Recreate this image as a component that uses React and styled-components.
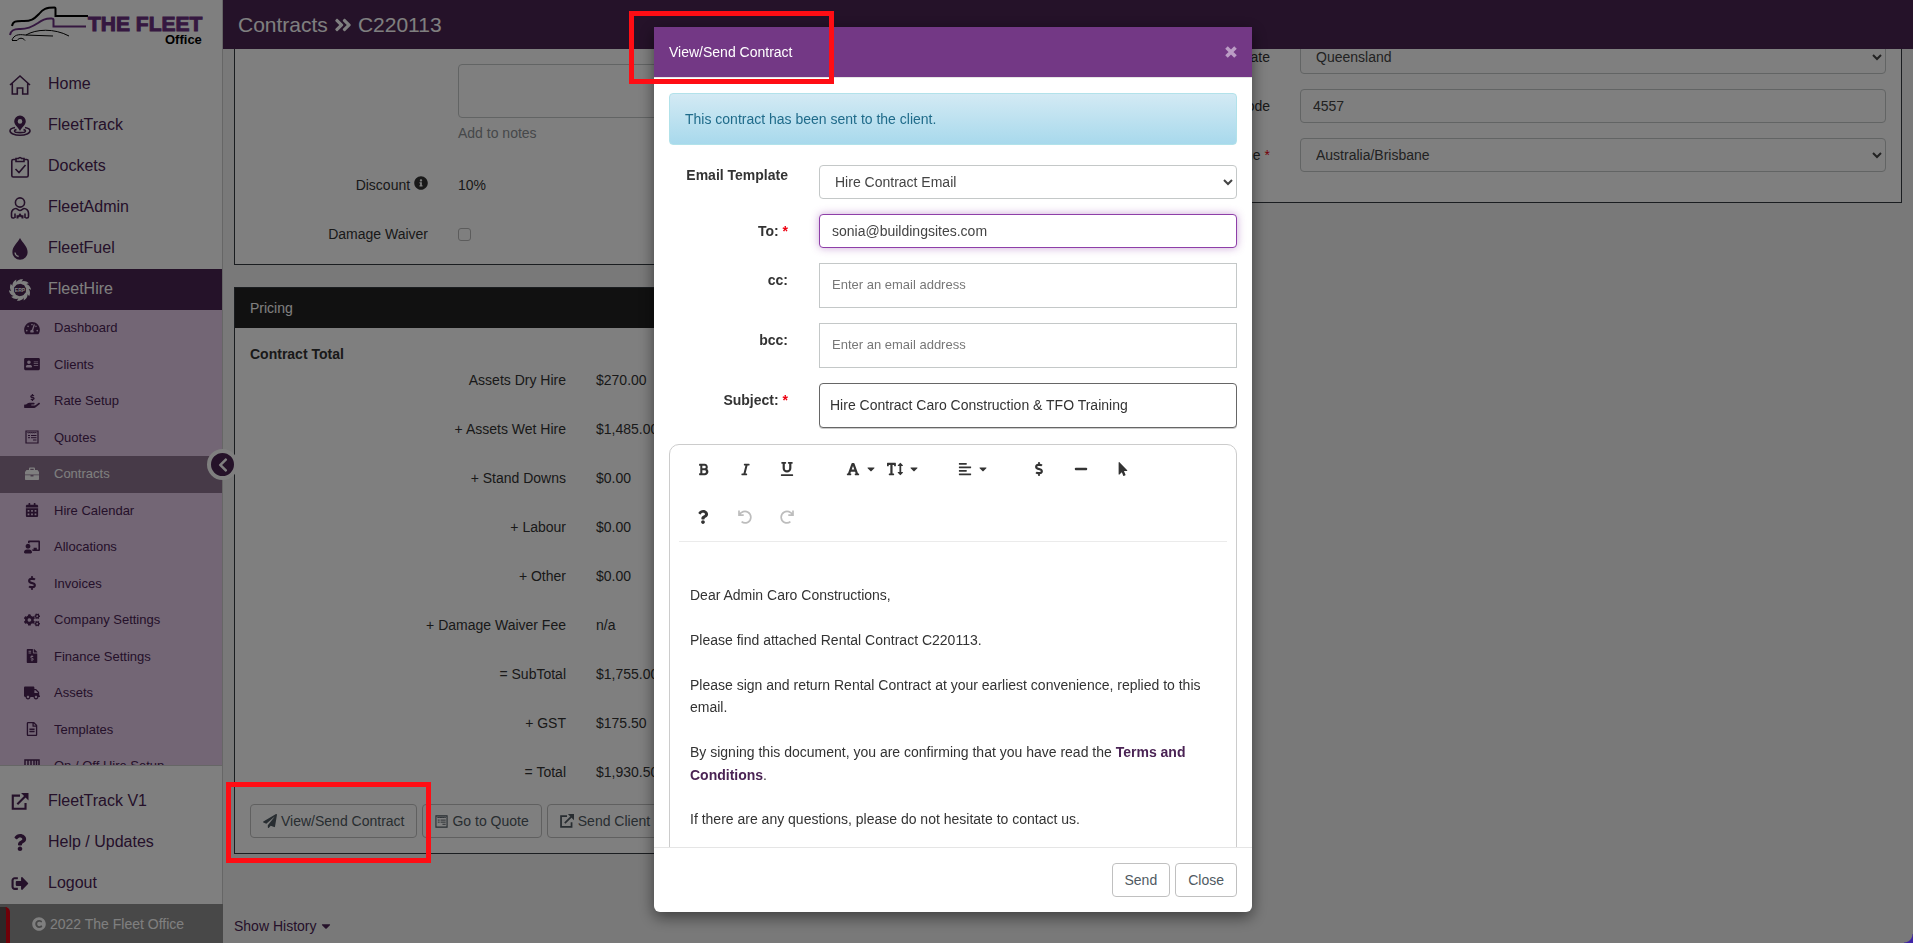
import React from 'react';
import styled, { createGlobalStyle, css } from 'styled-components';
import {
  FaAddressCard,
  FaAlignLeft,
  FaAngleDoubleRight,
  FaBold,
  FaCalendarAlt,
  FaCaretDown,
  FaChalkboardTeacher,
  FaChevronLeft,
  FaCogs,
  FaCopyright,
  FaDollarSign,
  FaFileInvoiceDollar,
  FaFont,
  FaHandHoldingUsd,
  FaInfoCircle,
  FaItalic,
  FaMinus,
  FaMousePointer,
  FaPaperPlane,
  FaQuestion,
  FaRegFileAlt,
  FaSignOutAlt,
  FaTachometerAlt,
  FaTextHeight,
  FaTruck,
  FaUnderline,
} from 'react-icons/fa';

const GlobalStyle = createGlobalStyle`
  * {
    box-sizing: border-box;
  }
  body {
    margin: 0;
    overflow: hidden;
    background: #f2f2f2;
    color: #333333;
    font-family: "Liberation Sans", Arial, sans-serif;
    font-size: 14px;
    line-height: 20px;
  }
  button, input, select, textarea {
    font-family: inherit;
    font-size: 14px;
  }
  a {
    color: #4a2354;
    text-decoration: none;
  }
`;

const Page = styled.div`
  display: flex;
  height: 100vh;
`;

/* sidebar */

const Sidebar = styled.aside`
  display: flex;
  flex-direction: column;
  flex: 0 0 223px;
  position: relative;
  background: #ffffff;
  border-right: 1px solid #cccccc;
`;

const Logo = styled.a`
  display: block;
  flex: none;
  height: 64px;
`;

const NavItem = styled.a`
  display: flex;
  flex: none;
  align-items: center;
  height: 41px;
  padding-left: 9px;
  gap: 17px;
  font-size: 16px;
  color: #4a2354;

  svg {
    flex: none;
    width: 22px;
    height: ${(props) => (props.$small ? '17px' : '22px')};
  }
  span {
    margin-bottom: 1px;
  }
  ${(props) =>
    props.$active &&
    css`
      background: #4a2452;
      color: #ffffff;
    `}
`;

const SubMenu = styled.div`
  flex: 1 1 0;
  overflow: hidden;
  background: #e6ccea;
  border-bottom: 1px solid #cccccc;
`;

const SubItem = styled.a`
  display: flex;
  align-items: center;
  gap: 14px;
  padding: 8px 0 9px 24px;
  font-size: 13px;
  line-height: 1.5;
  color: #4a2354;

  svg {
    flex: none;
    width: 16px;
    height: 14px;
  }
  ${(props) =>
    props.$active &&
    css`
      background: #8f7590;
      color: #ffffff;
    `}
`;

const BottomNav = styled.div`
  flex: none;
  padding-top: 15px;
`;

const Copyright = styled.div`
  display: flex;
  flex: none;
  align-items: center;
  gap: 4px;
  height: 39px;
  padding-left: 32px;
  margin-right: -1px;
  background: #909090;
  color: #ffffff;
`;

const Recorder = styled.div`
  position: absolute;
  left: 0;
  bottom: 0;
  width: 10px;
  height: 36px;
  background: #5a5050;
  border-right: 4px solid #e00010;
  border-top-right-radius: 5px;
`;

const CollapseButton = styled.button`
  position: absolute;
  right: -16px;
  top: 449px;
  display: flex;
  align-items: center;
  justify-content: center;
  width: 31px;
  height: 31px;
  padding: 0;
  border: 4px solid #ffffff;
  border-radius: 50%;
  background: #4a2452;
  color: #ffffff;
  clip-path: inset(0 3px 0 0);
`;

/* page content */

const Main = styled.main`
  flex: 1;
  min-width: 0;
  display: flex;
  flex-direction: column;
`;

const TopBar = styled.header`
  display: flex;
  flex: none;
  align-items: center;
  gap: 5px;
  height: 49px;
  padding: 0 15px;
  background: #4a2452;
  color: #ffffff;
  font-size: 21px;
`;

const Content = styled.div`
  flex: 1;
  min-height: 0;
  overflow: hidden;
  padding: 0 11px;
`;

const Columns = styled.div`
  display: grid;
  grid-template-columns: 1fr 1fr;
  gap: 24px;
  align-items: start;
`;

const Column = styled.div`
  display: flex;
  flex-direction: column;
  gap: 22px;
`;

const Panel = styled.section`
  background: #ffffff;
  border: 1px solid #343a40;
  ${(props) => props.$open && 'border-top: 0;'}
`;

const PanelTitle = styled.h2`
  margin: 0;
  padding: 10px 15px;
  background: #222222;
  color: #ffffff;
  font-size: 14px;
  font-weight: normal;
`;

const FieldList = styled.div`
  display: flex;
  flex-direction: column;
  gap: 15px;
  padding: 0 15px ${(props) => props.$bottom};
  margin-top: -9px;
`;

const Field = styled.div`
  display: grid;
  grid-template-columns: ${(props) => props.$label} 1fr;
  gap: 30px;
  min-height: 34px;

  > label,
  > span {
    padding: 7px 0;
  }
  > label {
    text-align: right;
  }
`;

const Required = styled.span`
  color: #ee0010;
`;

const controlStyle = css`
  display: block;
  width: 100%;
  height: 34px;
  padding: 6px 12px;
  border: 1px solid #c4c8c8;
  border-radius: 4px;
  background: #ffffff;
  color: #444444;
`;

const TextInput = styled.input`
  ${controlStyle}
  ${(props) =>
    props.$focused &&
    css`
      border-color: #8e3fa8;
      box-shadow: 0 0 8px rgba(142, 63, 168, 0.45);
      outline: none;
    `}
  ${(props) =>
    props.$tag &&
    css`
      height: 45px;
      padding: 5px 12px 7px;
      border-radius: 0;
      font-size: 13px;
      &::placeholder {
        color: #777777;
      }
    `}
  ${(props) =>
    props.$strong &&
    css`
      height: 45px;
      padding: 5px 10px 7px;
      border-color: #666666;
      box-shadow: 0 1px 0 #cccccc;
      color: #333333;
    `}
`;

const Select = styled.select`
  ${controlStyle}
  padding-left: 11px;
`;

const NotesWrap = styled.div`
  padding: 24px 0 10px;
`;

const Notes = styled.textarea`
  ${controlStyle}
  height: 54px;
  resize: none;
`;

const Hint = styled.p`
  margin: 5px 0 0;
  color: #8c9094;
`;

const CheckBox = styled.input`
  width: 13px;
  height: 13px;
  margin: 11px 0;
  appearance: none;
  border: 1px solid #b8b8b8;
  border-radius: 3px;
`;

const PricingBody = styled.div`
  padding: 14px 15px 15px;
`;

const PricingHeading = styled.h3`
  margin: 0;
  font-size: 14px;
  line-height: 24px;
`;

const PriceList = styled.dl`
  display: grid;
  grid-template-columns: 316px 1fr;
  column-gap: 30px;
  row-gap: 15px;
  margin: 0 0 12px;

  dt,
  dd {
    margin: 0;
    padding: 4px 0 10px;
  }
  dt {
    text-align: right;
  }
`;

const ButtonRow = styled.div`
  display: flex;
  gap: 5px;
`;

const Button = styled.button`
  display: flex;
  flex: none;
  align-items: center;
  gap: 4px;
  height: 34px;
  padding: 0 12px;
  border: 1px solid #c0c0c0;
  border-radius: 4px;
  background: #ffffff;
  color: #505a62;
`;

const HistoryLink = styled.a`
  display: inline-flex;
  align-items: center;
  gap: 3px;
  margin-top: 62px;
`;

/* outlines of the tutorial steps */

const Highlight = styled.div`
  position: absolute;
  left: ${(props) => props.$left};
  top: ${(props) => props.$top};
  z-index: 30;
  width: 205px;
  height: ${(props) => props.$height};
  border: 5px solid #ff0d14;
  pointer-events: none;
`;

const Anchor = styled.div`
  position: relative;
`;

/* dialog */

const Backdrop = styled.div`
  position: fixed;
  inset: 0;
  z-index: 20;
  display: flex;
  align-items: flex-start;
  justify-content: center;
  padding: 27px 7px 0 0;
  background: rgba(0, 0, 0, 0.5);
`;

const Dialog = styled.div`
  position: relative;
  width: 598px;
  max-width: 100%;
  border-radius: 0 0 6px 6px;
  background: #ffffff;
  box-shadow: 0 5px 15px rgba(0, 0, 0, 0.5);
`;

const DialogHeader = styled.header`
  display: flex;
  align-items: center;
  justify-content: space-between;
  height: 51px;
  padding: 0 15px;
  background: #733885;
  border-bottom: 1px solid #e5e5e5;
  color: #ffffff;

  h1 {
    margin: 0;
    font-size: 14px;
    font-weight: normal;
  }
  button {
    display: flex;
    padding: 0;
    border: 0;
    background: none;
    color: #bb9dc5;
  }
`;

const DialogBody = styled.div`
  height: calc(100vh - 174px);
  overflow: hidden;
  padding: 15px 15px 0;
`;

const Alert = styled.div`
  margin-bottom: 20px;
  padding: 15px;
  border: 1px solid #b2e2ea;
  border-radius: 4px;
  background: linear-gradient(#d3eaf4, #a8d9ec);
  color: #1f6b8a;
`;

const MailField = styled.div`
  display: grid;
  grid-template-columns: 119px 1fr;
  gap: 31px;
  margin-bottom: 15px;

  > label {
    padding-top: ${(props) => (props.$raised ? '0' : '7px')};
    text-align: right;
    font-weight: bold;
  }
`;

const Editor = styled.div`
  margin-top: 16px;
  padding: 0 9px;
  border: 1px solid #cccccc;
  border-radius: 10px;
`;

const Toolbar = styled.div`
  display: flex;
  flex-wrap: wrap;
  padding: 0 3px;
  border-bottom: 1px solid #ebebeb;
`;

const ToolGroup = styled.div`
  display: flex;
  margin-right: ${(props) => props.$gap || '0'};
`;

const Tool = styled.button`
  display: flex;
  align-items: center;
  justify-content: center;
  gap: ${(props) => (props.$menu ? '5px' : '0')};
  width: 42px;
  height: 48px;
  padding: 0;
  border: 0;
  background: none;
  color: #333333;

  &:disabled {
    color: #bdbdbd;
  }
`;

const Message = styled.div`
  padding: 20px 11px 60px;
  line-height: 1.6;

  p {
    margin: 0;
  }
  a {
    font-weight: bold;
  }
`;

const DialogFooter = styled.footer`
  display: flex;
  justify-content: flex-end;
  gap: 5px;
  padding: 15px;
  border-top: 1px solid #e5e5e5;
`;

const WindowCorner = styled.div`
  position: fixed;
  right: 0;
  bottom: 0;
  z-index: 40;
  width: 9px;
  height: 9px;
  background: radial-gradient(circle at 0 0, transparent 8px, #3f23a5 9px);
`;

/* icons that the icon font does not have */

const lineIcon = { fill: 'none', stroke: 'currentColor', strokeWidth: 1.6 };

const HomeIcon = () => (
  <svg viewBox="0 0 22 22" {...lineIcon}>
    <path d="M1 11 11 2l10 9M3.300 9.500V20h5v-6h5.400v6h5V9.500" />
  </svg>
);

const TrackIcon = () => (
  <svg viewBox="0 0 22 22" {...lineIcon}>
    <path
      fill="currentColor"
      stroke="none"
      fillRule="evenodd"
      d="M11 .5a5.800 5.800 0 0 0-5.800 5.800C5.200 10 9 12 11 16c2-4 5.800-6 5.800-9.700A5.800 5.800 0 0 0 11 .5zm0 3.600a2.300 2.300 0 1 1 0 4.600 2.300 2.300 0 0 1 0-4.600z"
    />
    <path d="M6 12.500c-3 .6-5 1.700-5 3.200 0 2.600 4.500 4.500 10 4.500s10-1.900 10-4.500c0-1.500-2-2.600-5-3.200" />
    <path d="M7.500 14.600c-1.500.3-2 .8-2 1.300 0 1 2.500 1.700 5.500 1.700s5.500-.7 5.500-1.700c0-.5-.5-1-2-1.300" />
  </svg>
);

const DocketIcon = () => (
  <svg viewBox="0 0 22 22" {...lineIcon}>
    <path d="M7 3.500H4.300A1.500 1.500 0 0 0 2.800 5v14.500A1.500 1.500 0 0 0 4.300 21h13.400a1.500 1.500 0 0 0 1.500-1.500V5a1.500 1.500 0 0 0-1.500-1.500H15" />
    <path d="M7 5.500v-3h2.500a1.600 1.600 0 0 1 3 0H15v3zM6.500 13l3.500 3.500L16.500 9" />
  </svg>
);

const AdminIcon = () => (
  <svg viewBox="0 0 22 22" {...lineIcon}>
    <circle cx="11" cy="5.500" r="4.600" />
    <path d="M5.500 21H4a1.500 1.500 0 0 1-1.500-1.500V16a4.500 4.500 0 0 1 4.500-4.500c1 0 2.500 2 4 2s3-2 4-2a4.500 4.500 0 0 1 4.500 4.500v3.500A1.500 1.500 0 0 1 18 21h-1.500M6 16.500V21M16 16.500V21" />
    <path d="M8.500 21.500v-2.200h1.300l1.200-1.600 1.200 1.600h1.300v2.200" strokeWidth="2" />
  </svg>
);

const FuelIcon = () => (
  <svg viewBox="0 0 22 22">
    <path
      fill="currentColor"
      d="M11 0c2 4.200 7.600 8.500 7.600 14A7.600 7.600 0 0 1 11 21.800 7.600 7.600 0 0 1 3.400 14C3.400 8.500 9 4.200 11 0z"
    />
    <path d="M6 14.500c.2 2.200 1.500 3.600 3.600 4" fill="none" stroke="#ffffff" strokeWidth="1.300" />
  </svg>
);

const HireIcon = () => (
  <svg viewBox="0 0 22 22" fill="currentColor">
    {[0, 36, 72, 108, 144, 180, 216, 252, 288, 324].map((angle) => (
      <path
        key={angle}
        transform={`rotate(${angle} 11 11)`}
        d="M6.600 6.200C6.500 2.500 9.500-.2 14.200.3 12.800 1.600 13 3 11.800 4.300 10.300 5.600 8.300 5 6.600 6.200z"
      />
    ))}
    <text x="11" y="13" fontSize="5" fontWeight="bold" textAnchor="middle">
      ERP
    </text>
  </svg>
);

const QuoteIcon = () => (
  <svg viewBox="0 0 14 14" width="13" height="13" fill="none" stroke="currentColor">
    <path d="M1 1h12v12H1z" strokeWidth="1.200" />
    <path d="M2.500 2l1 1.200 1-1.200 1 1.200 1-1.200 1 1.200 1-1.200 1 1.200 1-1.200 1 1.200M3 5.500h2M6 5.500h5.500M3 7.700h2M6 7.700h5.500M8 10h3.500" />
  </svg>
);

const CaseIcon = () => (
  <svg viewBox="0 0 16 14" fill="currentColor">
    <path
      fillRule="evenodd"
      d="M5 3V1.800C5 1 5.500.5 6.300.5h3.400c.8 0 1.300.5 1.300 1.300V3h2.500l1.500 2v2.500H1V5l1.500-2zm1.300 0h3.400V1.800H6.300z"
    />
    <path d="M1 8.300h5.500v1.200h3V8.300H15V12c0 .6-.4 1-1 1H2c-.6 0-1-.4-1-1z" />
  </svg>
);

const BarcodeIcon = () => (
  <svg viewBox="0 0 16 14" fill="none" stroke="currentColor" strokeWidth="1.500">
    <path d="M1 1h14v12H1zM4 1v8M7 1v8M10 1v8M12.500 1v8" />
  </svg>
);

const ExternalIcon = () => (
  <svg viewBox="0 0 16 16" width="14" height="14" fill="none" stroke="currentColor" strokeWidth="2">
    <path d="M8 2.500H1.200v12.300h12V9.500M5.500 10.500 13 3" />
    <path d="M9 0h7v7z" fill="currentColor" stroke="none" />
  </svg>
);

const CrossIcon = () => (
  <svg viewBox="0 0 12 12" width="12" height="12" stroke="currentColor" strokeWidth="3.600">
    <path d="M1.500 1.500l9 9M10.500 1.500l-9 9" />
  </svg>
);

const UndoIcon = () => (
  <svg viewBox="0 0 14 14" width="14" height="14" fill="none" stroke="currentColor" strokeWidth="1.700">
    <path d="M1 .5v4.700h4.700M1.300 5C3 1.500 7 .5 10 2.200c4 2.500 3.700 8.300-.4 10.200-2.300 1-4.400.6-6-.8" />
  </svg>
);

const RedoIcon = () => (
  <svg viewBox="0 0 14 14" width="14" height="14" fill="none" stroke="currentColor" strokeWidth="1.700">
    <path d="M13 .5v4.700H8.300M12.700 5C11 1.500 7 .5 4 2.200c-4 2.500-3.700 8.300.4 10.200 2.300 1 4.400.6 6-.8" />
  </svg>
);

const FleetLogo = () => (
  <svg width="222" height="60" viewBox="0 0 222 60" aria-label="The Fleet Office">
    <g fill="none">
      <path
        d="M12 26c1-5 4-5 10-5 9 .5 12-2 17-7 4-5 7-6.500 15.500-6.500.5 0 1 .5 1 1v7.500H88"
        stroke="#000000"
        strokeWidth="2"
      />
      <path
        d="M10 35c1-5 4-6 9-6 8 .5 13-2 19-6 5-4 9-5 14-4.500 1 0 1.500.5 1.500 1.500v6.500H86"
        stroke="#6b3080"
        strokeWidth="2"
      />
      <path
        d="M12 40c2-5 6-6 13-5l28 1M26 35c10-6 28-7 43 1M12 40.500h5c2-3 6-3 8 0"
        stroke="#000000"
      />
    </g>
    <text x="88" y="31" fontSize="21" fontWeight="bold" fill="#6b3080" stroke="#6b3080">
      THE FLEET
    </text>
    <text x="165" y="44" fontSize="13" fontWeight="bold" fill="#000000">
      Office
    </text>
  </svg>
);

const mainLinks = [
  ['Home', HomeIcon],
  ['FleetTrack', TrackIcon],
  ['Dockets', DocketIcon],
  ['FleetAdmin', AdminIcon],
  ['FleetFuel', FuelIcon],
  ['FleetHire', HireIcon],
];

const hireLinks = [
  ['Dashboard', FaTachometerAlt],
  ['Clients', FaAddressCard],
  ['Rate Setup', FaHandHoldingUsd],
  ['Quotes', QuoteIcon],
  ['Contracts', CaseIcon],
  ['Hire Calendar', FaCalendarAlt],
  ['Allocations', FaChalkboardTeacher],
  ['Invoices', FaDollarSign],
  ['Company Settings', FaCogs],
  ['Finance Settings', FaFileInvoiceDollar],
  ['Assets', FaTruck],
  ['Templates', FaRegFileAlt],
  ['On / Off Hire Setup', BarcodeIcon],
];

const bottomLinks = [
  ['FleetTrack V1', ExternalIcon],
  ['Help / Updates', FaQuestion],
  ['Logout', FaSignOutAlt],
];

const prices = [
  ['Assets Dry Hire', '$270.00'],
  ['+ Assets Wet Hire', '$1,485.00'],
  ['+ Stand Downs', '$0.00'],
  ['+ Labour', '$0.00'],
  ['+ Other', '$0.00'],
  ['+ Damage Waiver Fee', 'n/a'],
  ['= SubTotal', '$1,755.00'],
  ['+ GST', '$175.50'],
  ['= Total', '$1,930.50'],
];

function SideNav() {
  return (
    <Sidebar>
      <Logo href="#">
        <FleetLogo />
      </Logo>
      {mainLinks.map(([name, Icon]) => (
        <NavItem href="#" key={name} $active={name === 'FleetHire'}>
          <Icon />
          <span>{name}</span>
        </NavItem>
      ))}
      <SubMenu>
        {hireLinks.map(([name, Icon]) => (
          <SubItem href="#" key={name} $active={name === 'Contracts'}>
            <Icon />
            {name}
          </SubItem>
        ))}
      </SubMenu>
      <BottomNav>
        {bottomLinks.map(([name, Icon]) => (
          <NavItem href="#" key={name} $small>
            <Icon />
            <span>{name}</span>
          </NavItem>
        ))}
      </BottomNav>
      <Copyright>
        <FaCopyright /> 2022 The Fleet Office
      </Copyright>
      <Recorder />
      <CollapseButton aria-label="Collapse menu">
        <FaChevronLeft size={16} />
      </CollapseButton>
    </Sidebar>
  );
}

function ContractDetails() {
  return (
    <Panel $open>
      <FieldList $bottom="12px">
        <Field $label="178px">
          <span />
          <NotesWrap>
            <Notes aria-label="Notes" />
            <Hint>Add to notes</Hint>
          </NotesWrap>
        </Field>
        <Field $label="178px">
          <label>
            Discount <FaInfoCircle />
          </label>
          <span>10%</span>
        </Field>
        <Field $label="178px">
          <label htmlFor="waiver">Damage Waiver</label>
          <CheckBox type="checkbox" id="waiver" />
        </Field>
      </FieldList>
    </Panel>
  );
}

function Pricing() {
  return (
    <Panel>
      <PanelTitle>Pricing</PanelTitle>
      <PricingBody>
        <PricingHeading>Contract Total</PricingHeading>
        <PriceList>
          {prices.map(([name, value]) => (
            <React.Fragment key={name}>
              <dt>{name}</dt>
              <dd>{value}</dd>
            </React.Fragment>
          ))}
        </PriceList>
        <ButtonRow>
          <Anchor>
            <Button>
              <FaPaperPlane /> View/Send Contract
            </Button>
            <Highlight $left="-24px" $top="-22px" $height="81px" />
          </Anchor>
          <Button>
            <QuoteIcon /> Go to Quote
          </Button>
          <Button>
            <ExternalIcon /> Send Client
          </Button>
        </ButtonRow>
      </PricingBody>
    </Panel>
  );
}

function SiteDetails() {
  return (
    <Panel $open>
      <FieldList $bottom="30px">
        <Field $label="174px">
          <label htmlFor="state">State</label>
          <Select id="state">
            <option>Queensland</option>
          </Select>
        </Field>
        <Field $label="174px">
          <label htmlFor="postcode">Postcode</label>
          <TextInput id="postcode" defaultValue="4557" />
        </Field>
        <Field $label="174px">
          <label htmlFor="timezone">
            Timezone <Required>*</Required>
          </label>
          <Select id="timezone">
            <option>Australia/Brisbane</option>
          </Select>
        </Field>
      </FieldList>
    </Panel>
  );
}

function MailEditor() {
  return (
    <Editor>
      <Toolbar>
        <ToolGroup $gap="32px">
          <Tool aria-label="Bold"><FaBold size={13} /></Tool>
          <Tool aria-label="Italic"><FaItalic size={13} /></Tool>
          <Tool aria-label="Underline"><FaUnderline size={14} /></Tool>
        </ToolGroup>
        <ToolGroup $gap="28px">
          <Tool $menu aria-label="Text colour"><FaFont size={14} /><FaCaretDown size={12} /></Tool>
          <Tool $menu aria-label="Font size"><FaTextHeight size={16} /><FaCaretDown size={12} /></Tool>
        </ToolGroup>
        <ToolGroup $gap="24px">
          <Tool $menu aria-label="Align"><FaAlignLeft size={14} /><FaCaretDown size={12} /></Tool>
        </ToolGroup>
        <ToolGroup $gap="24px">
          <Tool aria-label="Insert price"><FaDollarSign size={14} /></Tool>
          <Tool aria-label="Insert line"><FaMinus size={14} /></Tool>
          <Tool aria-label="Select"><FaMousePointer size={14} /></Tool>
        </ToolGroup>
        <ToolGroup>
          <Tool aria-label="Help"><FaQuestion size={14} /></Tool>
          <Tool disabled aria-label="Undo"><UndoIcon /></Tool>
          <Tool disabled aria-label="Redo"><RedoIcon /></Tool>
        </ToolGroup>
      </Toolbar>
      <Message>
        <p>&nbsp;</p>
        <p>Dear Admin Caro Constructions,</p>
        <p>&nbsp;</p>
        <p>Please find attached Rental Contract C220113.</p>
        <p>&nbsp;</p>
        <p>
          Please sign and return Rental Contract at your earliest convenience,
          replied to this email.
        </p>
        <p>&nbsp;</p>
        <p>
          By signing this document, you are confirming that you have read
          the <a href="#">Terms and Conditions</a>.
        </p>
        <p>&nbsp;</p>
        <p>If there are any questions, please do not hesitate to contact us.</p>
      </Message>
    </Editor>
  );
}

function SendDialog() {
  return (
    <Backdrop>
      <Dialog role="dialog">
        <DialogHeader>
          <h1>View/Send Contract</h1>
          <button aria-label="Close dialog">
            <CrossIcon />
          </button>
        </DialogHeader>
        <DialogBody>
          <Alert>This contract has been sent to the client.</Alert>
          <MailField $raised>
            <label htmlFor="template">Email Template</label>
            <Select id="template">
              <option>Hire Contract Email</option>
            </Select>
          </MailField>
          <MailField>
            <label htmlFor="to">
              To: <Required>*</Required>
            </label>
            <TextInput id="to" $focused defaultValue="sonia@buildingsites.com" />
          </MailField>
          <MailField>
            <label htmlFor="cc">cc:</label>
            <TextInput id="cc" $tag placeholder="Enter an email address" />
          </MailField>
          <MailField>
            <label htmlFor="bcc">bcc:</label>
            <TextInput id="bcc" $tag placeholder="Enter an email address" />
          </MailField>
          <MailField>
            <label htmlFor="subject">
              Subject: <Required>*</Required>
            </label>
            <TextInput
              id="subject"
              $strong
              defaultValue="Hire Contract Caro Construction & TFO Training"
            />
          </MailField>
          <MailEditor />
        </DialogBody>
        <DialogFooter>
          <Button>Send</Button>
          <Button>Close</Button>
        </DialogFooter>
        <Highlight $left="-25px" $top="-16px" $height="73px" />
      </Dialog>
    </Backdrop>
  );
}

function App() {
  return (
    <>
      <GlobalStyle />
      <Page>
        <SideNav />
        <Main>
          <TopBar>
            Contracts <FaAngleDoubleRight size={20} /> C220113
          </TopBar>
          <Content>
            <Columns>
              <Column>
                <ContractDetails />
                <Pricing />
              </Column>
              <SiteDetails />
            </Columns>
            <HistoryLink href="#">
              Show History <FaCaretDown />
            </HistoryLink>
          </Content>
        </Main>
      </Page>
      <SendDialog />
      <WindowCorner />
    </>
  );
}

export default App;
